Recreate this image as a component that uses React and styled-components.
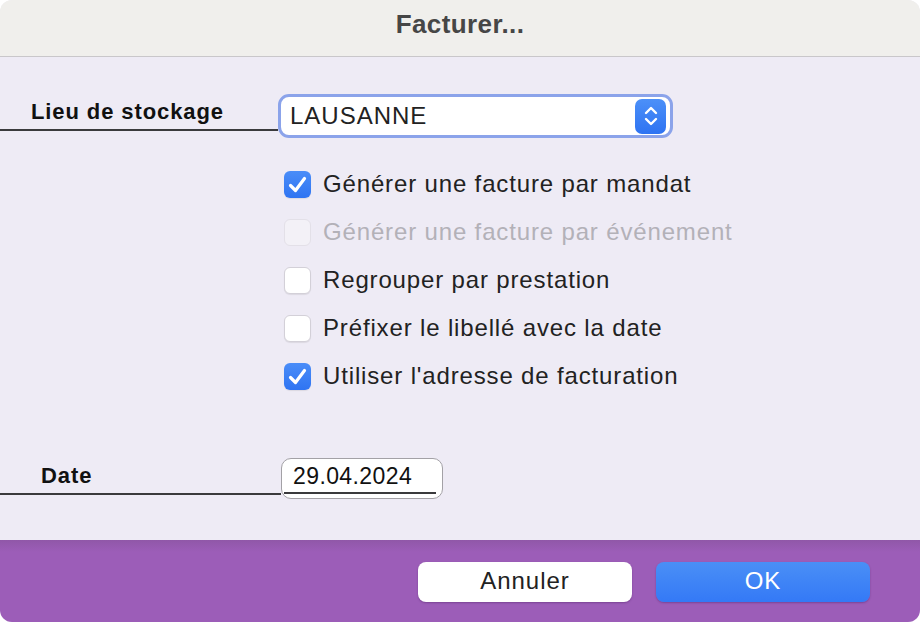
import React from "react";
import styled, { createGlobalStyle } from "styled-components";

const GlobalStyle = createGlobalStyle`
	html, body {
		margin: 0;
		padding: 0;
		background: #ffffff;
	}
	body {
		font-family: "Liberation Sans", Arial, sans-serif;
	}
`;

const Window = styled.div`
	width: 920px;
	height: 622px;
	border-radius: 12px;
	overflow: hidden;
	display: flex;
	flex-direction: column;
	background: #eeebf5;
`;

const TitleBar = styled.div`
	height: 56px;
	flex: none;
	display: flex;
	align-items: center;
	justify-content: center;
	background: #f0efec;
	border-bottom: 1px solid #c9c7ca;
`;

const Title = styled.h1`
	margin: 0 0 8px;
	font-size: 26px;
	font-weight: bold;
	letter-spacing: 0.4px;
	color: #464646;
`;

const Body = styled.div`
	flex: 1;
	padding-top: 37px;
	display: flex;
	flex-direction: column;
`;

const FieldRow = styled.div`
	display: flex;
	align-items: flex-start;
	margin-top: ${(p) => p.$top || 0}px;
`;

const FieldLabel = styled.div`
	width: ${(p) => p.$width}px;
	height: 35px;
	line-height: 35px;
	padding-left: ${(p) => p.$indent}px;
	box-sizing: content-box;
	border-bottom: 2px solid #3a3a3c;
	font-size: 22px;
	font-weight: bold;
	letter-spacing: 0.9px;
	color: #111;
	flex: none;
`;

const Select = styled.div`
	width: 395px;
	height: 44px;
	box-sizing: border-box;
	border: 3px solid #8ba3ea;
	border-radius: 11px;
	background: #fff;
	display: flex;
	align-items: center;
	justify-content: space-between;
	padding: 0 4px 0 9px;
	font-size: 24px;
	letter-spacing: 1px;
	color: #222;
`;

const Stepper = styled.div`
	width: 31px;
	height: 35px;
	border-radius: 7px;
	background: linear-gradient(#4c90f8, #2e73f2);
	display: flex;
	align-items: center;
	justify-content: center;
`;

const CheckList = styled.div`
	margin: 22px 0 0 284px;
	display: flex;
	flex-direction: column;
`;

const CheckRow = styled.label`
	height: 48px;
	display: flex;
	align-items: center;
	gap: 12px;
	font-size: 24px;
	letter-spacing: 0.85px;
	color: ${(p) => (p.$disabled ? "#b3b1b8" : "#222")};
`;

const Box = styled.span`
	width: 27px;
	height: 27px;
	box-sizing: border-box;
	border-radius: 6px;
	flex: none;
	display: flex;
	align-items: center;
	justify-content: center;
	background: ${(p) =>
		p.$checked ? "linear-gradient(#4a8df8, #2f74f2)" : p.$disabled ? "#f3f1f7" : "#fff"};
	border: ${(p) =>
		p.$checked ? "none" : p.$disabled ? "1px solid #e3e0e8" : "1px solid #d3d0d8"};
	box-shadow: ${(p) => (p.$disabled ? "none" : "0 1px 1px rgba(0,0,0,0.08)")};
`;

const DateField = styled.div`
	width: 162px;
	height: 41px;
	box-sizing: border-box;
	border: 1.5px solid #a3a1a6;
	border-radius: 10px;
	background: #fff;
	padding: 0 6px 0 2px;
`;

const DateInput = styled.div`
	height: 33px;
	line-height: 34px;
	border-bottom: 2px solid #3a3a3c;
	padding-left: 9px;
	font-size: 23px;
	letter-spacing: 0.4px;
	color: #111;
`;

const Footer = styled.div`
	height: 82px;
	flex: none;
	background: linear-gradient(#9057a8 0, #9c5db8 12px, #9c5db8);
	display: flex;
	justify-content: flex-end;
	align-items: flex-start;
	gap: 24px;
	padding: 22px 50px 0 0;
	box-sizing: border-box;
`;

const Button = styled.button`
	width: 214px;
	height: 40px;
	padding: 0 0 2px;
	border: none;
	border-radius: 8px;
	font-family: "Liberation Sans", Arial, sans-serif;
	font-size: 24px;
	letter-spacing: 1px;
	color: ${(p) => (p.$primary ? "#fff" : "#222")};
	background: ${(p) => (p.$primary ? "linear-gradient(#4a8ff6, #3479f6)" : "#fff")};
	box-shadow: 0 1px 2px rgba(60, 20, 80, 0.35);
`;

function Check() {
	return (
		<svg width="19" height="17" viewBox="0 0 19 17">
			<path d="M2.5 9.5 L7.5 14.5 L16.5 2.5" fill="none" stroke="#fff" strokeWidth="3.2" strokeLinecap="round" strokeLinejoin="round" />
		</svg>
	);
}

function Chevrons() {
	return (
		<svg width="16" height="24" viewBox="0 0 16 24">
			<path d="M3 9 L8 4 L13 9 M3 15 L8 20 L13 15" fill="none" stroke="#fff" strokeWidth="2.4" strokeLinecap="round" strokeLinejoin="round" />
		</svg>
	);
}

const options = [
	{ label: "Générer une facture par mandat", checked: true },
	{ label: "Générer une facture par événement", disabled: true },
	{ label: "Regrouper par prestation" },
	{ label: "Préfixer le libellé avec la date" },
	{ label: "Utiliser l'adresse de facturation", checked: true },
];

export default function App() {
	return (
		<>
			<GlobalStyle />
			<Window>
				<TitleBar>
					<Title>Facturer...</Title>
				</TitleBar>
				<Body>
					<FieldRow>
						<FieldLabel $width={247} $indent={31}>Lieu de stockage</FieldLabel>
						<Select>
							LAUSANNE
							<Stepper>
								<Chevrons />
							</Stepper>
						</Select>
					</FieldRow>
					<CheckList>
						{options.map((o) => (
							<CheckRow key={o.label} $disabled={o.disabled}>
								<Box $checked={o.checked} $disabled={o.disabled}>
									{o.checked && <Check />}
								</Box>
								{o.label}
							</CheckRow>
						))}
					</CheckList>
					<FieldRow $top={58}>
						<FieldLabel $width={240} $indent={41}>Date</FieldLabel>
						<DateField>
							<DateInput>29.04.2024</DateInput>
						</DateField>
					</FieldRow>
				</Body>
				<Footer>
					<Button>Annuler</Button>
					<Button $primary>OK</Button>
				</Footer>
			</Window>
		</>
	);
}
